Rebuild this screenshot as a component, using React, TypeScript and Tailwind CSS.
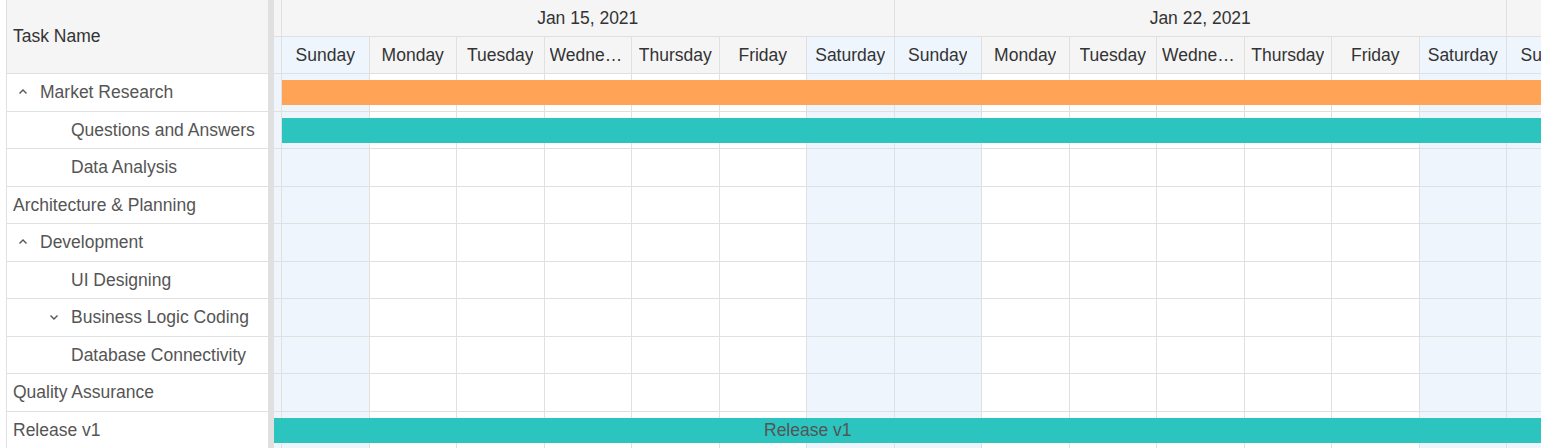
import React from "react";

type Task = { name: string; indent: number; chevron?: "up" | "down" };

const tasks: Task[] = [
  { name: "Market Research", indent: 0, chevron: "up" },
  { name: "Questions and Answers", indent: 2 },
  { name: "Data Analysis", indent: 2 },
  { name: "Architecture & Planning", indent: 0 },
  { name: "Development", indent: 0, chevron: "up" },
  { name: "UI Designing", indent: 2 },
  { name: "Business Logic Coding", indent: 2, chevron: "down" },
  { name: "Database Connectivity", indent: 2 },
  { name: "Quality Assurance", indent: 0 },
  { name: "Release v1", indent: 0 },
];

const dayNames = ["Sunday", "Monday", "Tuesday", "Wednesday", "Thursday", "Friday", "Saturday"];
// 15 full days shown, then a partly visible one
const days = Array.from({ length: 16 }, (_, i) => dayNames[i % 7]);

const font = { fontFamily: '"Liberation Sans", Arial, sans-serif' };

function Chevron({ dir }: { dir: "up" | "down" }) {
  return (
    <svg width="10" height="10" viewBox="0 0 10 10" className="shrink-0">
      {dir === "up" ? (
        <path d="M1.5 6.5 L5 3 L8.5 6.5" fill="none" stroke="#555" strokeWidth="1.4" />
      ) : (
        <path d="M1.5 3.5 L5 7 L8.5 3.5" fill="none" stroke="#555" strokeWidth="1.4" />
      )}
    </svg>
  );
}

function TaskRow({ task }: { task: Task }) {
  const pad =
    task.indent === 0
      ? task.chevron
        ? "pl-[11px]"
        : "pl-[6px]"
      : task.chevron
      ? "pl-[42px]"
      : "pl-[64px]";
  return (
    <div className={`flex items-center h-[37.5px] border-b border-[#e0e0e0] ${pad} text-[#555] text-[17.5px] whitespace-nowrap`}>
      {task.chevron && (
        <span className="w-[22px] flex items-center">
          <Chevron dir={task.chevron} />
        </span>
      )}
      <span>{task.name}</span>
    </div>
  );
}

function isWeekend(i: number) {
  return days[i] === "Sunday" || days[i] === "Saturday";
}

function GridCells() {
  return (
    <>
      <div className="w-[8px] shrink-0 h-full border-r border-[#e0e0e0] bg-[#eef5fd]" />
      {days.map((d, i) => (
        <div
          key={i}
          className={`w-[87.5px] shrink-0 h-full border-r border-[#e0e0e0] ${isWeekend(i) ? "bg-[#eef5fd]" : "bg-white"}`}
        />
      ))}
    </>
  );
}

export default function App() {
  return (
    <div className="flex w-[1541px] h-[448px] overflow-hidden bg-white text-[#333]" style={font}>
      {/* Task grid */}
      <div className="pl-[6px] shrink-0">
        <div className="w-[262px] border-l border-[#e0e0e0]">
          <div className="h-[74px] flex items-center pl-[6px] bg-[#f5f5f5] border-b border-[#e0e0e0] text-[17.5px] text-[#333]">
            Task Name
          </div>
          {tasks.map((t) => (
            <TaskRow key={t.name} task={t} />
          ))}
        </div>
      </div>

      {/* Splitter */}
      <div className="w-[6px] shrink-0 bg-[#e0e0e0]" />

      {/* Chart */}
      <div className="flex-1 overflow-hidden">
        {/* Header top tier */}
        <div className="flex h-[37px] bg-[#f5f5f5] border-b border-[#e0e0e0] text-[17.5px]">
          <div className="w-[8px] shrink-0 border-r border-[#e0e0e0]" />
          {["Jan 15, 2021", "Jan 22, 2021", ""].map((w, i) => (
            <div key={i} className="w-[612.5px] shrink-0 flex items-center justify-center border-r border-[#e0e0e0]">
              {w}
            </div>
          ))}
        </div>
        {/* Header bottom tier */}
        <div className="flex h-[37px] border-b border-[#e0e0e0] text-[17.5px]">
          <div className="w-[8px] shrink-0 border-r border-[#e0e0e0] bg-[#eef5fd]" />
          {days.map((d, i) => (
            <div
              key={i}
              className={`w-[87.5px] shrink-0 flex items-center justify-center px-[5px] border-r border-[#e0e0e0] ${isWeekend(i) ? "bg-[#eef5fd]" : "bg-[#f5f5f5]"}`}
            >
              <span className="truncate">{d}</span>
            </div>
          ))}
        </div>

        {/* Body rows */}
        {tasks.map((t, r) => (
          <div key={t.name} className="relative flex h-[37.5px] border-b border-[#e0e0e0]">
            <GridCells />
            {r === 0 && (
              <div className="absolute left-[8px] right-0 top-[6px] h-[25px] bg-[#ffa457]" />
            )}
            {r === 1 && (
              <div className="absolute left-[8px] right-0 top-[6.5px] h-[25px] bg-[#2bc4bf]" />
            )}
            {r === 9 && (
              <div className="absolute left-0 right-0 top-[6.5px] h-[25px] bg-[#2bc4bf] flex items-center pl-[490px] text-[17.5px] text-[#555]">
                Release v1
              </div>
            )}
          </div>
        ))}
      </div>
    </div>
  );
}
